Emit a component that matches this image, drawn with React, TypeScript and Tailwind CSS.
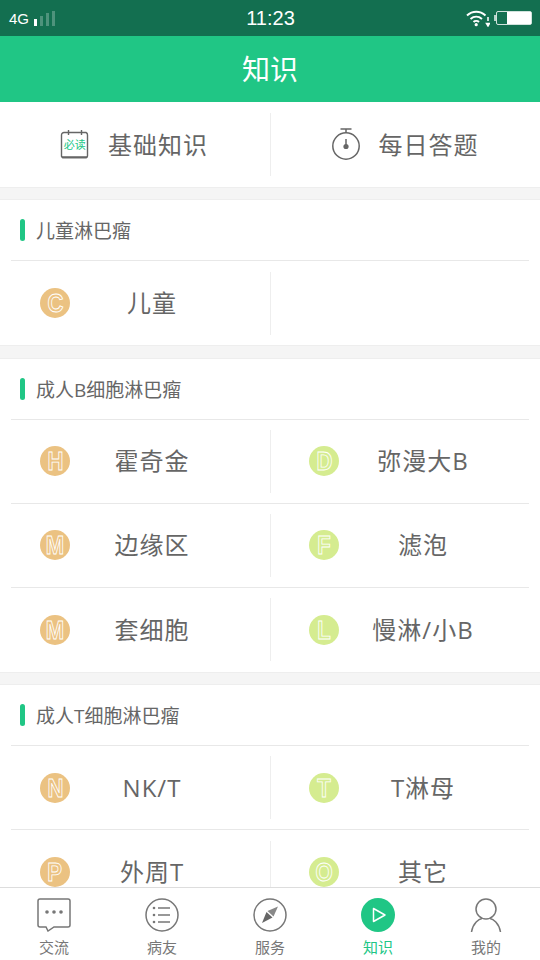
import { ReactNode } from "react";

const ORANGE = "bg-[#ebc282]";
const LIME = "bg-[#d5ec90]";

function LetterIcon({ letter, tone }: { letter: string; tone: string }) {
  return (
    <div className={`w-[30px] h-[30px] rounded-full flex items-center justify-center shrink-0 ${tone}`}>
      <span className="scale-x-[0.85] font-['Liberation_Sans',sans-serif] font-bold text-[26px] leading-none text-transparent [-webkit-text-stroke:0.9px_#ffffff]">
        {letter}
      </span>
    </div>
  );
}

function Cell({ letter, tone, label, second }: { letter: string; tone: string; label: string; second?: boolean }) {
  return (
    <div className="relative flex-1 h-full flex items-center">
      <div className={`w-[84px] shrink-0 flex ${second ? "pl-[38px]" : "pl-[40px]"}`}>
        <LetterIcon letter={letter} tone={tone} />
      </div>
      <span className="w-[136px] text-center text-[24px] tracking-[1px] leading-none text-[#666666] whitespace-nowrap">{label}</span>
    </div>
  );
}

function Row({ left, right, last }: { left: ReactNode; right?: ReactNode; last?: boolean }) {
  return (
    <div className={`h-[84px] mx-[11px] flex items-center ${last ? "" : "border-b border-[#e8e8e8]"}`}>
      <div className="w-[270px] -ml-[11px] h-full flex items-center shrink-0">{left}</div>
      <div className="w-px h-[63px] bg-[#eeeeee] shrink-0" />
      <div className="flex-1 h-full flex items-center">{right}</div>
    </div>
  );
}

function SectionHead({ title }: { title: string }) {
  return (
    <div className="h-[61px] mx-[11px] border-b border-[#e8e8e8] flex items-center pl-[9px] gap-[11px]">
      <div className="w-[5px] h-[22px] rounded-full bg-[#20c685]" />
      <span className="mt-[3px] text-[19px] leading-none text-[#666666] whitespace-nowrap">{title}</span>
    </div>
  );
}

function Gap() {
  return <div className="h-[13.5px] bg-[#f5f5f5] border-y border-[#eeeeee] shrink-0" />;
}

function Tab({ label, active, children }: { label: string; active?: boolean; children: ReactNode }) {
  return (
    <div className="flex-1 flex flex-col items-center pt-[9px]">
      <div className="h-[36px] flex items-center justify-center">{children}</div>
      <span className={`mt-[7px] text-[15px] leading-none ${active ? "text-[#20c685]" : "text-[#777777]"}`}>{label}</span>
    </div>
  );
}

export default function App() {
  return (
    <div className="w-[540px] h-[960px] overflow-hidden flex flex-col bg-white font-['Open_Sans','Noto_Sans_CJK_SC',sans-serif]">
      {/* status bar */}
      <div className="h-[36px] bg-[#136f50] flex items-center justify-between pl-[9px] pr-[8px] text-white shrink-0">
        <div className="w-[200px] flex items-center gap-[5px]">
          <span className="text-[15px] leading-none font-['Liberation_Sans',sans-serif]">4G</span>
          <div className="flex items-end gap-[3px] h-[15px]">
            <div className="w-[3px] h-[7px] bg-white" />
            <div className="w-[3px] h-[10px] bg-white/25" />
            <div className="w-[3px] h-[13px] bg-white/25" />
            <div className="w-[3px] h-[15px] bg-white/25" />
          </div>
        </div>
        <span className="text-[20px] leading-none font-['Liberation_Sans',sans-serif]">11:23</span>
        <div className="w-[200px] flex items-center justify-end gap-[6px]">
          <svg width="24" height="18" viewBox="0 0 24 18" fill="none" stroke="#fff" strokeWidth="2">
            <path d="M1 6.5C6.5 1.5 14 1.5 19.5 6.5" />
            <path d="M4.5 10C8 7 12.5 7 16 10" />
            <path d="M7.5 13C9 11.6 11.5 11.6 13 13" />
            <circle cx="10.2" cy="15.7" r="1.6" fill="#fff" stroke="none" />
            <path d="M22 8v4M20.5 14.5h3l-1.5 2.5z" strokeWidth="1.5" />
          </svg>
          <div className="relative w-[36px] h-[14px] border border-white/80 rounded-[2px] flex justify-end">
            <div className="absolute -left-[3px] top-[3px] w-[2px] h-[6px] bg-white/70" />
            <div className="w-[24px] h-full bg-white" />
          </div>
        </div>
      </div>

      {/* header */}
      <div className="h-[66px] bg-[#20c685] flex items-center justify-center shrink-0">
        <span className="text-[28px] leading-none text-white">知识</span>
      </div>

      <div className="flex-1 min-h-0 overflow-hidden">
        {/* top shortcuts */}
        <div className="h-[84.5px] flex items-center">
          <div className="flex-1 flex items-center pl-[60px] gap-[18px]">
            <svg width="30" height="30" viewBox="0 0 30 30" fill="none" stroke="#666" strokeWidth="1.4">
              <path d="M4 3.5h22a2.5 2.5 0 0 1 1.5 2.5v21q0 1.5-1.5 1.5H3q-1.5 0-1.5-1.5V6A2.5 2.5 0 0 1 4 3.5z" />
              <path d="M8.5 1v5M21.5 1v5" />
              <path d="M2 28.3h25" strokeWidth="2" />
              <text x="14.7" y="20" textAnchor="middle" fontSize="11" fill="#20c685" stroke="none" fontFamily="'Noto Sans CJK SC',sans-serif">必读</text>
            </svg>
            <span className="mt-[2px] text-[24px] tracking-[1px] leading-none text-[#666666] whitespace-nowrap">基础知识</span>
          </div>
          <div className="w-px h-[63px] bg-[#eeeeee]" />
          <div className="flex-1 flex items-center pl-[60px] gap-[18px]">
            <svg width="30" height="33" viewBox="0 0 30 33" fill="none" stroke="#666" strokeWidth="1.5">
              <circle cx="15" cy="18" r="13.2" />
              <path d="M9.5 1h11M15 1v4" />
              <path d="M15 11v7" />
              <circle cx="15" cy="18.5" r="2.6" fill="#666" stroke="none" />
            </svg>
            <span className="mt-[2px] text-[24px] tracking-[1px] leading-none text-[#666666] whitespace-nowrap">每日答题</span>
          </div>
        </div>
        <Gap />

        <SectionHead title="儿童淋巴瘤" />
        <Row last left={<Cell letter="C" tone={ORANGE} label="儿童" />} />
        <Gap />

        <SectionHead title="成人B细胞淋巴瘤" />
        <Row left={<Cell letter="H" tone={ORANGE} label="霍奇金" />} right={<Cell second letter="D" tone={LIME} label="弥漫大B" />} />
        <Row left={<Cell letter="M" tone={ORANGE} label="边缘区" />} right={<Cell second letter="F" tone={LIME} label="滤泡" />} />
        <Row last left={<Cell letter="M" tone={ORANGE} label="套细胞" />} right={<Cell second letter="L" tone={LIME} label="慢淋/小B" />} />
        <Gap />

        <SectionHead title="成人T细胞淋巴瘤" />
        <Row left={<Cell letter="N" tone={ORANGE} label="NK/T" />} right={<Cell second letter="T" tone={LIME} label="T淋母" />} />
        <Row last left={<Cell letter="P" tone={ORANGE} label="外周T" />} right={<Cell second letter="O" tone={LIME} label="其它" />} />
      </div>

      {/* tab bar */}
      <div className="h-[73px] border-t border-[#dddddd] bg-white flex shrink-0">
        <Tab label="交流">
          <svg width="34" height="34" viewBox="0 0 34 34" fill="none" stroke="#777" strokeWidth="1.5">
            <path d="M3 1h28a2 2 0 0 1 2 2v24a2 2 0 0 1-2 2H17l-6 4-2-4H3a2 2 0 0 1-2-2V3a2 2 0 0 1 2-2z" />
            <circle cx="10" cy="14" r="1.8" fill="#777" stroke="none" />
            <circle cx="17" cy="14" r="1.8" fill="#777" stroke="none" />
            <circle cx="24" cy="14" r="1.8" fill="#777" stroke="none" />
          </svg>
        </Tab>
        <Tab label="病友">
          <svg width="34" height="34" viewBox="0 0 34 34" fill="none" stroke="#777" strokeWidth="1.5">
            <circle cx="17" cy="17" r="16" />
            <path d="M13 10h12M13 17h12M13 24h12" />
            <circle cx="9" cy="10" r="1.3" fill="#777" stroke="none" />
            <circle cx="9" cy="17" r="1.3" fill="#777" stroke="none" />
            <circle cx="9" cy="24" r="1.3" fill="#777" stroke="none" />
          </svg>
        </Tab>
        <Tab label="服务">
          <svg width="34" height="34" viewBox="0 0 34 34" fill="none" stroke="#777" strokeWidth="1.5">
            <circle cx="17" cy="17" r="16" />
            <path d="M9 25L13.5 14L19.5 19.5z" fill="#666" stroke="none" />
            <path d="M14.5 13L25 8.5L20.5 18.5z" fill="#888" stroke="none" />
          </svg>
        </Tab>
        <Tab label="知识" active>
          <svg width="34" height="34" viewBox="0 0 34 34" fill="none">
            <circle cx="17" cy="17" r="17" fill="#20c685" />
            <path d="M12.5 10.5L24 17L12.5 23.5z" stroke="#fff" strokeWidth="1.5" strokeLinejoin="round" />
          </svg>
        </Tab>
        <Tab label="我的">
          <svg width="32" height="34" viewBox="0 0 32 34" fill="none" stroke="#777" strokeWidth="1.5">
            <circle cx="16" cy="11" r="10" />
            <path d="M1.5 34C3 25 9 21 12 20.5M30.5 34C29 25 23 21 20 20.5" />
          </svg>
        </Tab>
      </div>
    </div>
  );
}
